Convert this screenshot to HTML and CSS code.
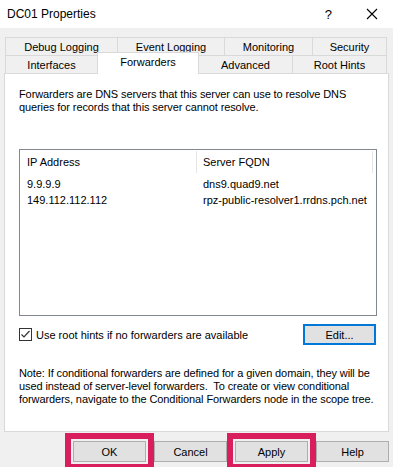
FILE: index.html
```html
<!doctype html>
<html lang="en">
<head>
    <meta charset="UTF-8">
    <title>DC01 Properties</title>
    <link rel="stylesheet" href="styles.css">
</head>
<body>
<div class="dialog">
    <div class="titleBar">
        <span class="title">DC01 Properties</span>
        <span class="help">?</span>
        <svg class="close" width="12" height="12" viewBox="0 0 12 12">
            <path d="M1 1 L11 11 M11 1 L1 11" stroke="#000" stroke-width="1.1" fill="none"/>
        </svg>
    </div>

    <div class="tabs">
        <div class="tabRow">
            <span class="tab w112">Debug Logging</span>
            <span class="tab w107">Event Logging</span>
            <span class="tab w88">Monitoring</span>
            <span class="tab w74">Security</span>
        </div>
        <div class="tabRow">
            <span class="tab w92">Interfaces</span>
            <span class="tab w101 current">Forwarders</span>
            <span class="tab w94">Advanced</span>
            <span class="tab w94">Root Hints</span>
        </div>
    </div>

    <div class="panel">
        <p class="intro">Forwarders are DNS servers that this server can use to resolve DNS queries for records that this server cannot resolve.</p>

        <div class="listBox">
            <div class="listHead">
                <span class="col1">IP Address</span>
                <span class="col2">Server FQDN</span>
            </div>
            <div class="listRow">
                <span class="col1">9.9.9.9</span>
                <span class="col2">dns9.quad9.net</span>
            </div>
            <div class="listRow">
                <span class="col1">149.112.112.112</span>
                <span class="col2">rpz-public-resolver1.rrdns.pch.net</span>
            </div>
        </div>

        <div class="optionRow">
            <label class="check">
                <svg class="box" width="13" height="13" viewBox="0 0 13 13">
                    <rect x="0.5" y="0.5" width="12" height="12" fill="#fff" stroke="#333"/>
                    <path d="M2.5 6.5 L5 9 L10.5 3" stroke="#333" stroke-width="1.2" fill="none"/>
                </svg>
                Use root hints if no forwarders are available
            </label>
            <button class="btn edit">Edit...</button>
        </div>

        <p class="note">Note: If conditional forwarders are defined for a given domain, they will be used instead of server-level forwarders.&nbsp; To create or view conditional forwarders, navigate to the Conditional Forwarders node in the scope tree.</p>
    </div>

    <div class="buttons">
        <button class="btn marked">OK</button>
        <button class="btn">Cancel</button>
        <button class="btn marked">Apply</button>
        <button class="btn">Help</button>
    </div>
</div>
</body>
</html>
```

FILE: styles.css
```css
* {
    margin: 0;
    padding: 0;
    box-sizing: border-box;
}

html, body {
    width: 393px;
    height: 467px;
    overflow: hidden;
}

body {
    background: #f0f0f0;
    font-family: "Liberation Sans", Arial, sans-serif;
    font-size: 11px;
    color: #000;
}

.titleBar {
    height: 28px;
    background: #fff;
    display: flex;
    align-items: center;
    padding-left: 7px;
}

.titleBar .title {
    font-size: 12px;
    flex: 1;
}

.titleBar .help {
    font-size: 13px;
    margin-right: 34px;
}

.titleBar .close {
    margin-right: 15px;
}

.tabs {
    margin: 9px 0 0 5px;
}

.tabRow {
    display: flex;
    height: 18px;
}

.tab {
    display: flex;
    align-items: center;
    justify-content: center;
    border: 1px solid #d9d9d9;
    border-bottom: none;
    margin-right: -1px;
    background: #f0f0f0;
}

.tabRow + .tabRow .tab {
    border-top: 1px solid #d9d9d9;
}

.tab.current {
    position: relative;
    z-index: 2;
    background: #fff;
    height: 22px;
    margin-top: -3px;
    padding-bottom: 3px;
}

.w112 { width: 113px; }
.w107 { width: 108px; }
.w88 { width: 89px; }
.w74 { width: 75px; }
.w92 { width: 93px; }
.w101 { width: 102px; }
.w94 { width: 95px; }

.panel {
    margin-left: 4px;
    width: 385px;
    height: 359px;
    background: #fff;
    border: 1px solid #d9d9d9;
    padding: 14px 0 0 14px;
}

.intro, .note {
    line-height: 13px;
    width: 360px;
    letter-spacing: -0.1px;
}

.note {
    width: 368px;
}

.listBox {
    margin-top: 35px;
    width: 358px;
    height: 167px;
    border: 1px solid #828790;
}

.listHead, .listRow {
    display: flex;
}

.listHead {
    height: 24px;
    align-items: center;
    margin-bottom: 2px;
}

.listRow {
    height: 16px;
    align-items: center;
}

.col1 {
    width: 177px;
    padding-left: 7px;
}

.col2 {
    flex: 1;
    padding-left: 6px;
}

.listHead .col1, .listHead .col2 {
    height: 22px;
    display: flex;
    align-items: center;
    border-right: 1px solid #e5e5e5;
}

.listHead .col2 {
    flex: none;
    width: 176px;
}

.optionRow {
    display: flex;
    align-items: center;
    justify-content: space-between;
    width: 357px;
    margin-top: 8px;
}

.check {
    display: flex;
    align-items: center;
    gap: 4px;
}

.btn {
    font-family: inherit;
    font-size: 11px;
    color: #000;
    background: #e1e1e1;
    border: 1px solid #adadad;
    width: 73px;
    height: 21px;
}

.btn.edit {
    border: 2px solid #0078d7;
    height: 21px;
}

.note {
    margin-top: 22px;
}

.buttons {
    display: flex;
    gap: 8px;
    margin: 9px 0 0 73px;
}

.btn.marked {
    outline: 6px solid #d81e5c;
    outline-offset: 2px;
}
```
